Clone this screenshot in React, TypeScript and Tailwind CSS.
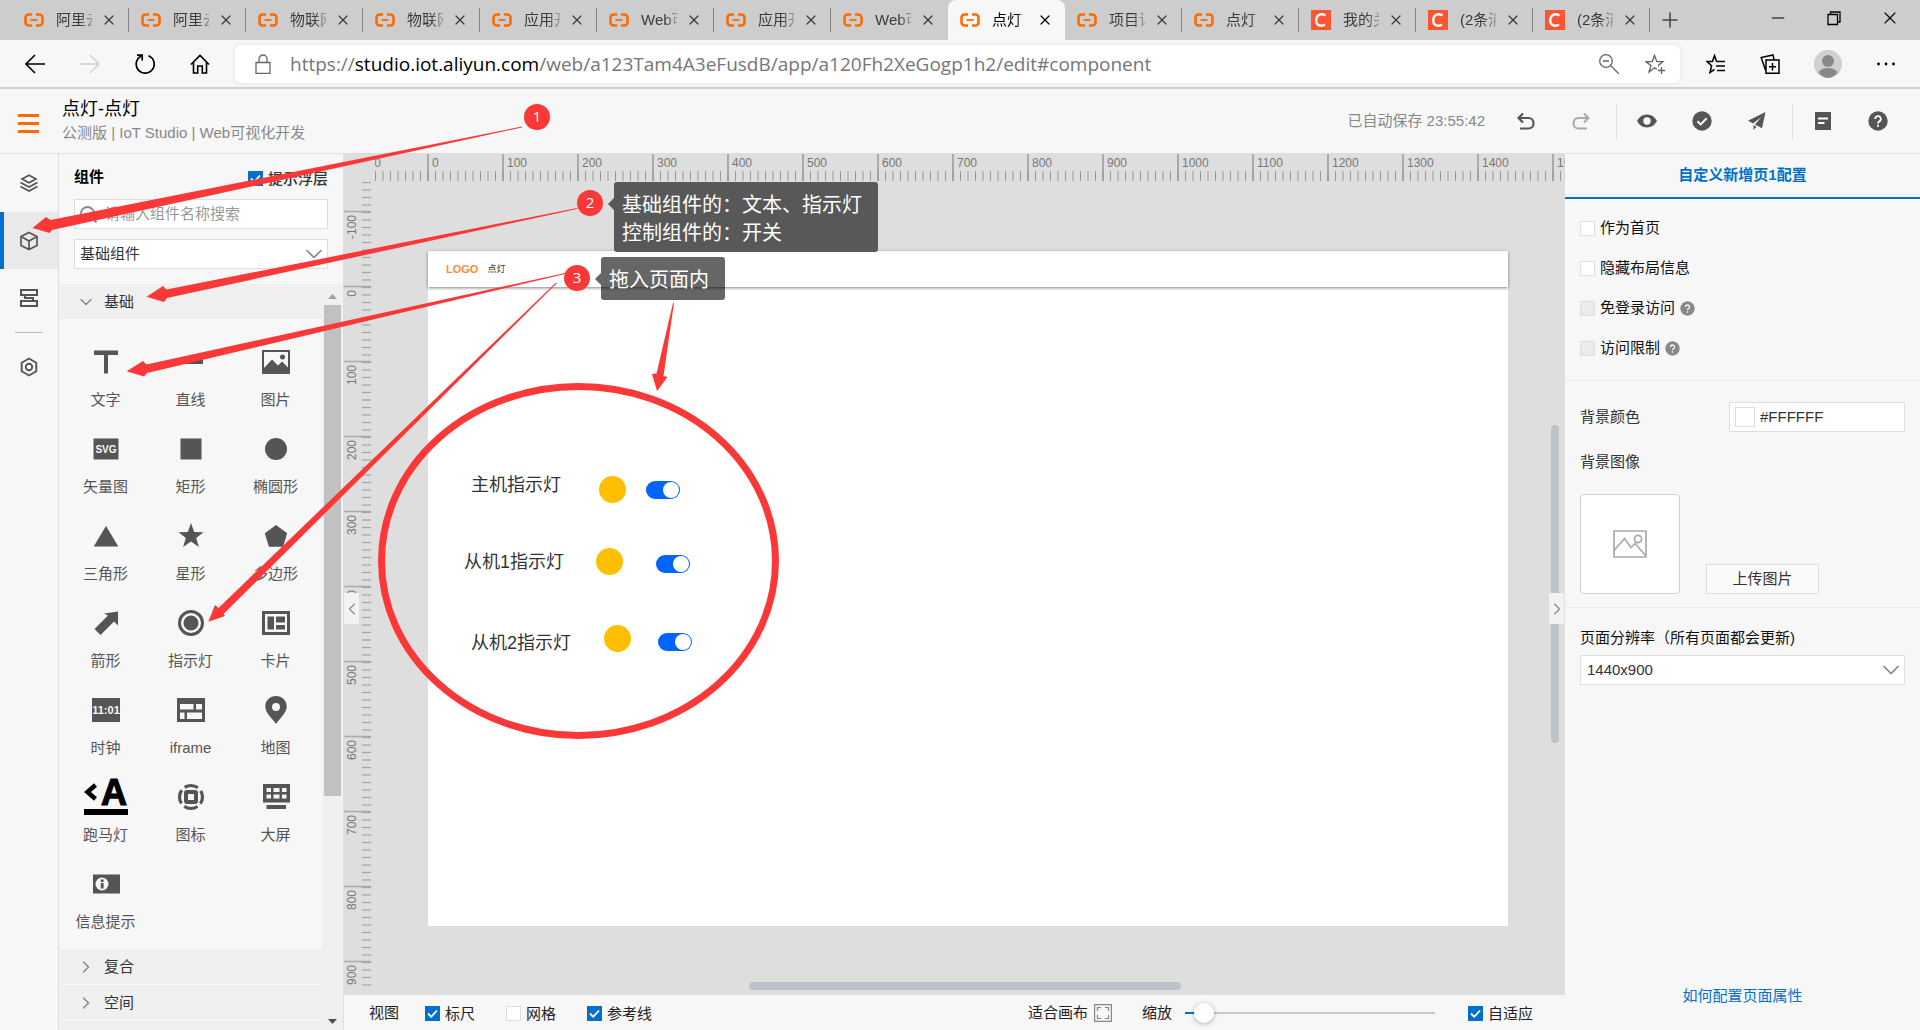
import React, { useState } from 'react';
import { ChevronDown, ChevronLeft, ChevronRight, Minus, Plus, X } from 'lucide-react';

const tabs = [
  { title: '阿里云', site: 'aliyun' },
  { title: '阿里云', site: 'aliyun' },
  { title: '物联网', site: 'aliyun' },
  { title: '物联网', site: 'aliyun' },
  { title: '应用开', site: 'aliyun' },
  { title: 'Web可', site: 'aliyun' },
  { title: '应用开', site: 'aliyun' },
  { title: 'Web可', site: 'aliyun' },
  { title: '点灯', site: 'aliyun', active: true },
  { title: '项目详', site: 'aliyun' },
  { title: '点灯', site: 'aliyun' },
  { title: '我的关', site: 'csdn' },
  { title: '(2条消', site: 'csdn' },
  { title: '(2条消', site: 'csdn' },
];

function Favicon({ site }: { site: string }) {
  if (site === 'csdn') {
    return (
      <svg className="w-5 h-5 shrink-0" viewBox="0 0 20 20">
        <rect width="20" height="20" fill="#fc5531" />
        <path d="M14.500 5.600c-1-.9-2.200-1.300-3.700-1.300-3.300 0-5.600 2.400-5.600 5.900 0 3.300 2 5.500 5.200 5.500 1.500 0 2.700-.3 3.700-.9" fill="none" stroke="#fff" strokeWidth="2.400" />
      </svg>
    );
  }
  return (
    <svg className="w-5 h-5 shrink-0" viewBox="0 0 20 20" fill="none" stroke="#ff6a00">
      <path d="M8 4.500H4.500a3 3 0 0 0-3 3v5a3 3 0 0 0 3 3H8" strokeWidth="2.600" />
      <path d="M12 4.500h3.500a3 3 0 0 1 3 3v5a3 3 0 0 1-3 3H12" strokeWidth="2.600" />
      <path d="M6.500 10h7" strokeWidth="1.800" />
    </svg>
  );
}

function TabStrip() {
  return (
    <div className="flex h-10 bg-[#cdcdcd] pl-3">
      {tabs.map((tab, i) => {
        const noLine = tab.active || tabs[i + 1]?.active;
        return (
          <div
            key={i}
            className={
              tab.active
                ? 'relative flex w-[117px] items-center rounded-t-lg bg-[#f7f7f7] pl-3 text-black'
                : 'relative flex w-[117px] items-center pl-3 text-[#3a3a3a]'
            }
          >
            <Favicon site={tab.site} />
            <span className="ml-3 w-9 overflow-hidden whitespace-nowrap text-[15px] leading-5 [mask-image:linear-gradient(to_right,black_65%,rgba(0,0,0,0.3))]">
              {tab.title}
            </span>
            <button className="ml-[9px]" aria-label="关闭标签页">
              <X className="h-4 w-4" strokeWidth={1.8} />
            </button>
            {!noLine && <div className="absolute right-0 top-2 h-6 w-px bg-[#858585]"></div>}
          </div>
        );
      })}
      <button className="ml-2 text-[#444]" aria-label="新建标签页">
        <Plus className="h-6 w-6" strokeWidth={1.5} />
      </button>
      <div className="ml-auto flex items-center gap-9 pr-5 pb-1 text-black">
        <button aria-label="最小化">
          <Minus className="h-5 w-5" strokeWidth={1.4} />
        </button>
        <button aria-label="还原">
          <svg className="h-5 w-5" viewBox="0 0 20 20" fill="none" stroke="currentColor" strokeWidth="1.300">
            <path d="M4 6.500h9.500v10H4zM6.500 6.500v-2.500h9.500v10h-2.500" />
          </svg>
        </button>
        <button aria-label="关闭">
          <X className="h-5 w-5" strokeWidth={1.3} />
        </button>
      </div>
    </div>
  );
}

function AddressBar() {
  return (
    <div className="flex h-[49px] items-center border-b-2 border-[#cfcfcf] bg-[#f7f7f7] pl-[25px] pr-6">
      <div className="flex items-center gap-[35px] text-black">
        <button aria-label="后退">
          <svg className="h-5 w-5" viewBox="0 0 20 20" fill="none" stroke="currentColor" strokeWidth="1.600">
            <path d="M20 10H1M10 1 1 10l9 9" />
          </svg>
        </button>
        <button aria-label="前进" className="text-[#cfcfcf]">
          <svg className="h-5 w-5" viewBox="0 0 20 20" fill="none" stroke="currentColor" strokeWidth="1.400">
            <path d="M0 10h19M10 1l9 9-9 9" />
          </svg>
        </button>
        <button aria-label="刷新">
          <svg className="h-5 w-5" viewBox="0 0 20 20" fill="none" stroke="currentColor" strokeWidth="1.700">
            <path d="M13.500 1.800A9 9 0 1 1 6 2.200M2 1.200h5.200v5.200" />
          </svg>
        </button>
        <button aria-label="主页">
          <svg className="h-5 w-5" viewBox="0 0 20 20" fill="none" stroke="currentColor" strokeWidth="1.600">
            <path d="M1 10.500 10 1.500l9 9M3.500 8.500V19h4.200v-7h4.600v7h4.200V8.500" />
          </svg>
        </button>
      </div>
      <div className="ml-[25px] flex h-[38px] flex-1 items-center rounded-md bg-white pl-5 pr-[15px] shadow-[0_0_4px_rgba(0,0,0,0.1)]">
        <svg className="h-5 w-4 shrink-0" viewBox="0 0 16 20" fill="none" stroke="#666" strokeWidth="1.300">
          <path d="M1 8.500h14v11H1zM4 8.500V5a4 4 0 0 1 8 0v3.500" />
        </svg>
        <div className="ml-[19px] flex-1 whitespace-nowrap font-['Open_Sans','Noto_Sans',sans-serif] text-[19px] leading-6 text-[#767676]">
          https://<span className="text-black">studio.iot.aliyun.com</span>/web/a123Tam4A3eFusdB/app/a120Fh2XeGogp1h2/edit#component
        </div>
        <div className="flex gap-[26px] text-[#666]">
          <button aria-label="缩放">
            <svg className="h-5 w-5" viewBox="0 0 20 20" fill="none" stroke="currentColor" strokeWidth="1.300">
              <circle cx="7" cy="7" r="6.300" />
              <path d="M4 7h6M11.500 11.500 20 20" />
            </svg>
          </button>
          <button aria-label="收藏">
            <svg className="h-5 w-5" viewBox="0 0 20 20" fill="none" stroke="currentColor" strokeWidth="1.300">
              <path d="M12 15.500 9.500 13.800 4 18l2-6.500L1 7.600h6.200L9.500 1.500l2.300 6.100H18l-4.500 3.600.4 1.300M13 16.500h7M16.500 13v7" />
            </svg>
          </button>
        </div>
      </div>
      <div className="ml-[26px] flex items-center gap-[34px] text-black">
        <button aria-label="收藏夹">
          <svg className="h-5 w-5" viewBox="0 0 20 20" fill="none" stroke="currentColor" strokeWidth="1.500">
            <path d="M10.500 7.600 8.500 1.500l-2 6.100H1l4.600 4.100L4 18.500l4.500-3.200M10.500 7.600H19M10 12h9M11 16.500h8" />
          </svg>
        </button>
        <button aria-label="集锦">
          <svg className="h-5 w-5" viewBox="0 0 20 20" fill="none" stroke="currentColor" strokeWidth="1.500">
            <path d="M6 6h13v13.200H6zM12.500 9v7.500M9 12.700h7M5.500 16 1.200 3.500 13 1l1 4.500" />
          </svg>
        </button>
        <button aria-label="个人资料">
          <svg className="h-7 w-7" viewBox="0 0 28 28">
            <circle cx="14" cy="14" r="14" fill="#d2d0ce" />
            <circle cx="14" cy="11" r="6" fill="#8a8886" />
            <path d="M4.500 22.500C6 19.500 9.500 18 14 18s8 1.500 9.500 4.500A14 14 0 0 1 14 28a14 14 0 0 1-9.500-5.500z" fill="#8a8886" />
          </svg>
        </button>
        <button aria-label="设置及其他">
          <svg className="h-5 w-5" viewBox="0 0 20 20" fill="currentColor">
            <circle cx="2.500" cy="10" r="1.400" />
            <circle cx="10" cy="10" r="1.400" />
            <circle cx="17.500" cy="10" r="1.400" />
          </svg>
        </button>
      </div>
    </div>
  );
}

function AppHeader() {
  return (
    <header className="flex h-[65px] items-center border-b border-[#dedede] bg-[#f7f7f7] pl-[18px] pr-8">
      <button aria-label="菜单" className="mt-1 flex w-[21px] flex-col gap-[5px]">
        <span className="h-[3px] w-full bg-[#ff6a00]"></span>
        <span className="h-[3px] w-full bg-[#ff6a00]"></span>
        <span className="h-[3px] w-full bg-[#ff6a00]"></span>
      </button>
      <div className="ml-[23px]">
        <h1 className="text-[18px] leading-6 text-black">点灯-点灯</h1>
        <p className="text-[15px] leading-6 text-[#888]">公测版 | IoT Studio | Web可视化开发</p>
      </div>
      <div className="ml-auto flex items-center text-[#555]">
        <span className="mr-[31px] text-[15px] leading-5 text-[#888]">已自动保存 23:55:42</span>
        <button aria-label="撤销">
          <svg className="h-5 w-5" viewBox="0 0 20 20" fill="none" stroke="currentColor" strokeWidth="2.200">
            <path d="M4 17.500h8.500a5 5 0 0 0 5-5v-.5a5 5 0 0 0-5-5H3M7 2.500 2.500 7 7 11.500" />
          </svg>
        </button>
        <button aria-label="重做" className="ml-[35px] text-[#aaa]">
          <svg className="h-5 w-5" viewBox="0 0 20 20" fill="none" stroke="currentColor" strokeWidth="2">
            <path d="M16 17.500H7.500a5 5 0 0 1-5-5v-.5a5 5 0 0 1 5-5H17M13 2.500 17.500 7 13 11.500" />
          </svg>
        </button>
        <div className="ml-[25px] mr-5 h-[35px] w-px bg-[#dedede]"></div>
        <button aria-label="预览">
          <svg className="h-5 w-5" viewBox="0 0 20 20" fill="currentColor">
            <path fillRule="evenodd" d="M10 3.500c4.500 0 8 2.800 10 6.500-2 3.700-5.500 6.500-10 6.500S2 13.700 0 10c2-3.700 5.500-6.500 10-6.500zm0 2.800a3.700 3.700 0 1 0 0 7.400 3.700 3.700 0 0 0 0-7.400z" />
          </svg>
        </button>
        <button aria-label="验证" className="ml-[35px]">
          <svg className="h-5 w-5" viewBox="0 0 20 20">
            <circle cx="10" cy="10" r="9.700" fill="currentColor" />
            <path d="m5.500 10.200 3.200 3.200 6-6.200" fill="none" stroke="#fff" strokeWidth="2" />
          </svg>
        </button>
        <button aria-label="发布" className="ml-[35px]">
          <svg className="h-5 w-5" viewBox="0 0 20 20" fill="currentColor">
            <path d="M18.500 1 1 9.800l5 2.600L14.500 6 8 13.500l7 3.800zM6.500 14v5l3-3.300z" />
          </svg>
        </button>
        <div className="ml-[25px] mr-5 h-[35px] w-px bg-[#dedede]"></div>
        <button aria-label="文档">
          <svg className="h-5 w-5" viewBox="0 0 20 20">
            <path d="M2 1h16v18H2z" fill="currentColor" />
            <path d="M5 7.500h10M5 12h6.500" stroke="#fff" strokeWidth="1.800" />
          </svg>
        </button>
        <button aria-label="帮助" className="ml-[35px]">
          <svg className="h-5 w-5" viewBox="0 0 20 20">
            <circle cx="10" cy="10" r="9.700" fill="currentColor" />
            <path d="M7.200 8a2.800 2.800 0 1 1 4.200 2.400c-.9.5-1.400 1-1.400 2M10 13.800v2" fill="none" stroke="#fff" strokeWidth="1.800" />
          </svg>
        </button>
      </div>
    </header>
  );
}

function SideRail() {
  return (
    <nav className="flex w-[59px] shrink-0 flex-col border-r border-[#dedede] bg-[#f7f7f7] text-[#555]">
      <button aria-label="页面" className="flex h-[58px] items-center justify-center">
        <svg className="h-5 w-5" viewBox="0 0 20 20" fill="none" stroke="currentColor" strokeWidth="1.700">
          <path d="M10 2.200 17 6l-7 3.800L3 6zM1.500 9.500 10 14l8.500-4.500M1.500 13.500 10 18l8.500-4.500" />
        </svg>
      </button>
      <button aria-label="组件" className="flex h-[57px] items-center justify-center border-l-4 border-[#0070cc] bg-[#e9e9e9] pr-1">
        <svg className="h-5 w-5" viewBox="0 0 20 20" fill="none" stroke="currentColor" strokeWidth="1.700">
          <path d="m10 1.500 8 4v9l-8 4-8-4v-9zM2 5.500l8 4.500 8-4.500M10 10v8.500" />
        </svg>
      </button>
      <button aria-label="数据" className="flex h-[58px] items-center justify-center">
        <svg className="h-5 w-5" viewBox="0 0 20 20" fill="none" stroke="currentColor" strokeWidth="2">
          <path d="M2 2h16v5H2zM2 13h16v5H2zM6 7v3h8v3" />
        </svg>
      </button>
      <div className="mx-[15px] mt-[5px] mb-6 h-px bg-[#bbb]"></div>
      <button aria-label="设置" className="flex justify-center">
        <svg className="h-5 w-5" viewBox="0 0 20 20" fill="none" stroke="currentColor" strokeWidth="1.900">
          <path d="m10 1.500 7.300 4.200v8.600L10 18.500l-7.300-4.200V5.700z" />
          <circle cx="10" cy="10" r="3.200" />
        </svg>
      </button>
    </nav>
  );
}

interface CheckProps {
  id: string;
  label: string;
  checked?: boolean;
  disabled?: boolean;
}

function Check({ id, label, checked = false, disabled = false }: CheckProps) {
  const [on, setOn] = useState(checked);
  return (
    <div className="flex items-center gap-[5px]">
      <div className="grid h-[15px] w-[15px]">
        <input
          id={id}
          type="checkbox"
          checked={on}
          disabled={disabled}
          onChange={() => setOn(!on)}
          className="col-start-1 row-start-1 h-[15px] w-[15px] appearance-none border border-[#dedede] bg-white checked:border-[#0070cc] checked:bg-[#0070cc] disabled:bg-[#ebebeb]"
        />
        {on && (
          <svg className="pointer-events-none col-start-1 row-start-1 h-[15px] w-[15px]" viewBox="0 0 15 15" fill="none" stroke="#fff" strokeWidth="1.800">
            <path d="m3 7.500 3.200 3.300L12 4.500" />
          </svg>
        )}
      </div>
      <label htmlFor={id} className="whitespace-nowrap text-[15px] leading-5">
        {label}
      </label>
    </div>
  );
}

const star = '16,3 19.200,12 28.500,12.200 21.200,17.900 23.900,27 16,21.600 8.100,27 10.800,17.900 3.500,12.200 12.800,12';

const widgets = [
  { name: '文字', icon: <path d="M4 4.500h24V9H18v18.500h-4V9H4z" /> },
  { name: '直线', icon: <path d="M4 13.500h24v4.500H4z" /> },
  {
    name: '图片',
    icon: (
      <>
        <path fillRule="evenodd" d="M2 4h28v24H2zM4 6v16l8-8.500 6 6 4-4 6 6V6z" />
        <circle cx="22.500" cy="11" r="2.500" />
      </>
    ),
  },
  {
    name: '矢量图',
    icon: (
      <>
        <path d="M3.500 5.500h25v21h-25z" />
        <text x="16" y="19.500" fontSize="10" fontWeight="700" fill="#f7f7f7" textAnchor="middle">SVG</text>
      </>
    ),
  },
  { name: '矩形', icon: <path d="M5.500 5.500h21v21h-21z" /> },
  { name: '椭圆形', icon: <circle cx="16" cy="16" r="11" /> },
  { name: '三角形', icon: <path d="m16 6 12.300 20.500H3.700z" /> },
  { name: '星形', icon: <polygon points={star} /> },
  { name: '多边形', icon: <path d="m16 5 11.200 8.300L23 26.700H9L4.800 13.300z" /> },
  { name: '箭形', icon: <path d="M28 4.500v14l-4-4L10.500 28 4.500 22 18 8.500l-4-2z" /> },
  {
    name: '指示灯',
    icon: (
      <>
        <circle cx="16" cy="16" r="11.500" fill="none" stroke="currentColor" strokeWidth="3" />
        <circle cx="16" cy="16" r="7.500" />
      </>
    ),
  },
  {
    name: '卡片',
    icon: <path fillRule="evenodd" d="M2 4h28v24H2zM5 7v18h22V7zM7.500 9.500h6.500v13H7.500zM16 9.500h9v6h-9zM16 18h9v4.500h-9z" />,
  },
  {
    name: '时钟',
    icon: (
      <>
        <path d="M2 4h28v24H2z" />
        <text x="16" y="20" fontSize="11" fontWeight="700" fill="#f7f7f7" textAnchor="middle">11:01</text>
      </>
    ),
  },
  {
    name: 'iframe',
    icon: <path fillRule="evenodd" d="M2 4h28v24H2zM5 10v5.500h13.500V10zM21 10v5.500h6V10zM5 18.500V25h4.500v-6.500zM12 18.500V25h15v-6.500z" />,
  },
  {
    name: '地图',
    icon: <path fillRule="evenodd" d="M16 2c6 0 10.700 4.500 10.700 10.500C26.700 19 20 24 16 30 12 24 5.300 19 5.300 12.500 5.300 6.500 10 2 16 2zm0 7a4 4 0 1 0 0 8 4 4 0 0 0 0-8z" />,
  },
  { name: '跑马灯', icon: null },
  {
    name: '图标',
    icon: (
      <>
        <circle cx="16" cy="16" r="11.500" fill="none" stroke="currentColor" strokeWidth="3.200" strokeDasharray="14 4.060" strokeDashoffset="7" />
        <path fillRule="evenodd" d="M12 9h8a3 3 0 0 1 3 3v8a3 3 0 0 1-3 3h-8a3 3 0 0 1-3-3v-8a3 3 0 0 1 3-3zm1 4v6h6v-6z" />
      </>
    ),
  },
  {
    name: '大屏',
    icon: (
      <path fillRule="evenodd" d="M3 3h27v18.500H3zM6.500 7v4h4.500V7zM13.500 7v4h6V7zM22 7v4h4.500V7zM6.500 13.500v4h4.500v-4zM13.500 13.500v4h6v-4zM22 13.500v4h4.500v-4zM6.500 24h19.500v4H6.500z" />
    ),
  },
  {
    name: '信息提示',
    icon: (
      <>
        <path d="M3 6.500h27v19H3z" />
        <circle cx="12" cy="16" r="6.500" fill="#f7f7f7" />
        <path d="M10.800 11.500h2.800V14h-2.800zM10.800 15h2.800v5.500h-2.800z" />
      </>
    ),
  },
];

function ComponentPanel() {
  return (
    <aside className="flex w-[285px] shrink-0 flex-col border-r border-[#dedede] bg-[#f7f7f7]">
      <div className="flex h-[45px] items-center justify-between pl-[15px] pr-[15px] text-[15px] leading-5">
        <h2 className="font-bold text-black">组件</h2>
        <div className="pt-1 font-medium text-[#333]">
          <Check id="tips" label="提示浮层" checked />
        </div>
      </div>
      <div className="mx-[15px] flex h-[30px] items-center border border-[#dedede] bg-white">
        <svg className="ml-1 h-5 w-5 shrink-0" viewBox="0 0 20 20" fill="none" stroke="#888" strokeWidth="1.800">
          <circle cx="8.500" cy="9.500" r="6.500" />
          <path d="m13 14 4.500 4.500" />
        </svg>
        <input
          type="text"
          aria-label="搜索组件"
          placeholder="请输入组件名称搜索"
          className="ml-[6px] w-full min-w-0 bg-transparent text-[15px] leading-5 text-[#333] outline-none placeholder:text-[#999]"
        />
      </div>
      <div className="relative mx-[15px] mt-[10px]">
        <select aria-label="组件分类" className="h-[30px] w-full appearance-none border border-[#dedede] bg-white pl-[5px] text-[15px] leading-5 text-[#333]">
          <option>基础组件</option>
        </select>
        <ChevronDown className="pointer-events-none absolute right-0 top-px h-7 w-7 text-[#888]" strokeWidth={1.5} />
      </div>

      <div className="mt-[15px] flex min-h-0 flex-1 bg-[#f0f0f0]">
        <div className="min-w-0 flex-1 overflow-hidden">
          <button className="flex h-[35px] w-full items-center bg-[#f0f0f0] pl-[17px] text-[15px] leading-5 text-[#333]">
            <ChevronDown className="h-5 w-5 text-[#888]" strokeWidth={1.8} />
            <span className="ml-2">基础</span>
          </button>
          <div className="grid grid-cols-[repeat(3,85px)] bg-[#f7f7f7] px-1 pt-[10px] pb-[11px] text-[#555]">
            {widgets.map((w) => (
              <div key={w.name} className="flex h-[87px] flex-col items-center pt-2">
                <div className="flex h-[50px] items-center">
                  {w.icon ? (
                    <svg className="h-8 w-8" viewBox="0 0 32 32" fill="currentColor">{w.icon}</svg>
                  ) : (
                    <svg className="h-10 w-12 text-black" viewBox="0 0 48 40" fill="currentColor">
                      <path d="M13.500 8 5.500 15l8 7" fill="none" stroke="currentColor" strokeWidth="4.500" />
                      <text x="32" y="28" fontSize="36" fontWeight="700" textAnchor="middle" stroke="currentColor" strokeWidth="1.200">A</text>
                      <path d="M2 32h44v6H2z" />
                    </svg>
                  )}
                </div>
                <span className="mt-[3px] whitespace-nowrap text-[15px] leading-5">{w.name}</span>
              </div>
            ))}
          </div>
          {['复合', '空间', '控制'].map((name) => (
            <button key={name} className="flex h-9 w-full items-center border-b border-[#f7f7f7] bg-[#f0f0f0] pl-[17px] text-[15px] leading-5 text-[#333]">
              <ChevronRight className="h-5 w-5 text-[#888]" strokeWidth={1.8} />
              <span className="ml-2">{name}</span>
            </button>
          ))}
        </div>
        <div className="flex w-[21px] flex-col items-center pt-2 pb-1">
          <svg className="h-[9px] w-[9px]" viewBox="0 0 9 9"><path d="M0 7h9L4.500 2z" fill="#a0a0a0" /></svg>
          <div className="mt-1 h-[491px] w-[17px] bg-[#c1c1c1]"></div>
          <svg className="mt-auto h-[9px] w-[9px]" viewBox="0 0 9 9"><path d="M0 2h9L4.500 7z" fill="#505050" /></svg>
        </div>
      </div>
    </aside>
  );
}

// rulers: 100 units are 75px, a small tick every 10 units
function TopRuler() {
  const minors = Array.from({ length: 160 }, (_, i) => 0.5 + i * 7.5);
  const majors = Array.from({ length: 17 }, (_, i) => i - 1);
  return (
    <svg className="block h-7 w-full bg-[#dedede]" fontSize="12" fill="#777">
      <svg x="31" width="100%" height="28" overflow="hidden">
        {minors.map((x) => (
          <path key={x} d={`M${x} 17v10`} stroke="#999" strokeWidth="1" />
        ))}
        {majors.map((n) => (
          <g key={n}>
            <path d={`M${n * 75 + 53} 0v27`} stroke="#999" strokeWidth="1.500" />
            <text x={n * 75 + 57} y="13">{n * 100}</text>
          </g>
        ))}
      </svg>
    </svg>
  );
}

function LeftRuler() {
  const minors = Array.from({ length: 108 }, (_, i) => 0.5 + i * 7.5);
  const majors = Array.from({ length: 11 }, (_, i) => i - 1);
  return (
    <svg className="block h-full w-7 shrink-0 bg-[#dedede]" fontSize="12" fill="#777">
      {minors.map((y) => (
        <path key={y} d={`M18 ${y}h9`} stroke="#a4a4a4" strokeWidth="1.200" />
      ))}
      {majors.map((n) => (
        <g key={n}>
          <path d={`M0 ${n * 75 + 104.5}h27`} stroke="#aaa" strokeWidth="1.500" />
          <text transform={`translate(12 ${n * 75 + 108}) rotate(-90)`} textAnchor="end">{n * 100}</text>
        </g>
      ))}
    </svg>
  );
}

const devices = [
  { name: '主机指示灯', text: 'left-[43px] top-[222px]', lamp: 'left-[171px] top-[225px]', toggle: 'left-[218px] top-[230px]' },
  { name: '从机1指示灯', text: 'left-[36px] top-[299px]', lamp: 'left-[168px] top-[297px]', toggle: 'left-[228px] top-[304px]' },
  { name: '从机2指示灯', text: 'left-[43px] top-[380px]', lamp: 'left-[176px] top-[374px]', toggle: 'left-[230px] top-[382px]' },
];

function PageCanvas() {
  return (
    <div className="relative flex min-w-0 flex-1 bg-[#dedede] pt-[69px] pr-[57px] pb-[69px] pl-14">
      <div className="relative flex-1 bg-white">
        <div className="flex h-9 items-center gap-[9px] pl-[18px] shadow-[0_1px_3px_rgba(0,0,0,0.5)]">
          <span className="text-[11px] leading-4 font-bold text-[#ff8a3c]">LOGO</span>
          <span className="text-[9px] leading-4 text-[#333]">点灯</span>
        </div>
        {devices.map((d) => (
          <div key={d.name}>
            <label htmlFor={d.name} className={`absolute text-[18px] leading-6 whitespace-nowrap text-[#333] ${d.text}`}>
              {d.name}
            </label>
            <div className={`absolute h-[27px] w-[27px] rounded-full bg-[#ffbf00] ${d.lamp}`}></div>
            <input
              id={d.name}
              type="checkbox"
              role="switch"
              defaultChecked
              className={`absolute h-[18px] w-[34px] appearance-none rounded-full bg-[#bbb] checked:bg-[#0064ff] before:absolute before:top-px before:left-px before:h-4 before:w-4 before:rounded-full before:bg-white checked:before:left-[17px] ${d.toggle}`}
            />
          </div>
        ))}
      </div>
      {/* scroll thumbs and the panel handle lie over the canvas */}
      <div className="absolute top-[243px] right-[6px] h-[318px] w-2 rounded-full bg-[#bcc3cb]"></div>
      <div className="absolute bottom-[5px] left-[377px] h-2 w-[432px] rounded-full bg-[#bcc3cb]"></div>
      <button aria-label="收起配置" className="absolute top-[411px] right-px flex h-[31px] w-[15px] items-center justify-center bg-[#f2f2f2] text-[#888]">
        <ChevronRight className="h-5 w-5 shrink-0" strokeWidth={1.3} />
      </button>
    </div>
  );
}

function BottomBar() {
  return (
    <footer className="flex h-[35px] items-center bg-[#f7f7f7] pl-[25px] pr-8 text-[15px] leading-5 text-[#222]">
      <span className="mr-[26px]">视图</span>
      <div className="flex gap-[31px] pt-0.5">
        <Check id="ruler" label="标尺" checked />
        <Check id="grid" label="网格" />
        <Check id="guide" label="参考线" checked />
      </div>
      <button className="ml-auto flex items-center gap-[6px]">
        适合画布
        <svg className="h-[18px] w-[18px]" viewBox="0 0 18 18" fill="none" stroke="#888" strokeWidth="1.200">
          <path d="M.6.600h16.800v16.800H.6zM3.500 7V3.500H7M11 3.500h3.500V7M14.500 11v3.500H11M7 14.500H3.500V11" />
        </svg>
      </button>
      <label htmlFor="zoom" className="ml-[30px]">缩放</label>
      <input
        id="zoom"
        type="range"
        min={0}
        max={100}
        defaultValue={4}
        className="ml-[13px] mr-[33px] h-5 w-[250px] appearance-none bg-[linear-gradient(to_right,#0070cc_10px,#c8c8c8_10px)] bg-[length:100%_2px] bg-center bg-no-repeat [&::-webkit-slider-thumb]:h-5 [&::-webkit-slider-thumb]:w-5 [&::-webkit-slider-thumb]:appearance-none [&::-webkit-slider-thumb]:rounded-full [&::-webkit-slider-thumb]:bg-white [&::-webkit-slider-thumb]:shadow-[0_1px_5px_rgba(0,0,0,0.3)]"
      />
      <div className="pt-0.5">
        <Check id="fit" label="自适应" checked />
      </div>
    </footer>
  );
}

function HelpDot() {
  return (
    <svg className="ml-[5px] h-[15px] w-[15px]" viewBox="0 0 15 15">
      <circle cx="7.500" cy="7.500" r="7.200" fill="#888" />
      <path d="M5.500 6a2 2 0 1 1 3 1.700c-.7.400-1 .700-1 1.400M7.500 10.300v1.500" fill="none" stroke="#fff" strokeWidth="1.300" />
    </svg>
  );
}

function ConfigPanel() {
  return (
    <aside className="flex w-[355px] shrink-0 flex-col bg-[#f7f7f7] text-[15px] leading-5 text-[#333]">
      <h2 className="flex h-[41px] items-center justify-center border-b border-[#ebebeb] pt-0.5 font-bold text-[#0070cc]">自定义新增页1配置</h2>
      <div className="mt-0.5 h-0.5 bg-[#0070cc]"></div>
      <div className="flex flex-col gap-5 border-b border-[#ebebeb] px-[15px] pt-[19px] pb-[22px] text-[#111]">
        <Check id="home" label="作为首页" />
        <Check id="hide" label="隐藏布局信息" />
        <div className="flex items-center">
          <Check id="nologin" label="免登录访问" disabled />
          <HelpDot />
        </div>
        <div className="flex items-center">
          <Check id="limit" label="访问限制" disabled />
          <HelpDot />
        </div>
      </div>
      <div className="border-b border-[#ebebeb] px-[15px] pt-[21px] pb-[13px]">
        <div className="flex items-center justify-between">
          <label htmlFor="bg">背景颜色</label>
          <div className="flex h-[30px] w-44 items-center border border-[#dedede] bg-white pl-[5px]">
            <div className="h-5 w-5 shrink-0 border border-[#dedede] bg-white"></div>
            <input id="bg" type="text" defaultValue="#FFFFFF" className="ml-[5px] w-full min-w-0 bg-transparent outline-none" />
          </div>
        </div>
        <p className="mt-5">背景图像</p>
        <div className="mt-[22px] flex items-end gap-[26px]">
          <div className="flex h-[100px] w-[100px] items-center justify-center rounded-sm border border-[#d0d0d0] bg-white">
            <svg className="h-7 w-[34px]" viewBox="0 0 34 28" fill="none" stroke="#aaa" strokeWidth="1.700">
              <path d="M1 1h32v26H1zM1 20.500 11.500 8.500l6.500 9 4-4L33 26" />
              <circle cx="25" cy="9" r="3.600" />
            </svg>
          </div>
          <button className="h-[30px] w-[113px] border border-[#dedede] bg-[#fafafa]">上传图片</button>
        </div>
      </div>
      <div className="px-[15px] pt-5">
        <label htmlFor="size" className="text-[#111]">页面分辨率（所有页面都会更新)</label>
        <div className="relative mt-[7px]">
          <select id="size" className="h-[30px] w-full appearance-none border border-[#dedede] bg-white pl-[6px]">
            <option>1440x900</option>
          </select>
          <ChevronDown className="pointer-events-none absolute top-px right-0 h-7 w-7 text-[#888]" strokeWidth={1.5} />
        </div>
      </div>
      <a href="#help" className="mt-auto mb-6 text-center text-[#0070cc]">如何配置页面属性</a>
    </aside>
  );
}

const badges = [
  { n: 1, x: 537, y: 117 },
  { n: 2, x: 590, y: 203 },
  { n: 3, x: 577, y: 278 },
];

function Annotations() {
  return (
    <>
      <svg className="pointer-events-none absolute inset-0 h-full w-full" fill="#fb3838">
        <path d="m522 126.500 0 1L52 230l-2.500 3-17-5L46 217l4.500 3z" />
        <path d="m577 208 0 1L167 298l-3 4-17.500-5.300L163 286l3.500 3.500z" />
        <path d="m565 273 0 1L147 373l-3 3.500-17.500-5.200L143 361l3.500 3.500z" />
        <path d="m556 282.500.8.8L223.500 614l1.500 2-16.700 5.700L215 605l3.500 3z" />
        <path d="m673 303h1l-10.500 73 4 1-10.500 14-5-17 4.500-.5z" />
        <ellipse cx="578.500" cy="561" rx="197" ry="174.500" fill="none" stroke="#fb3838" strokeWidth="7" />
        {badges.map((b) => (
          <g key={b.n}>
            <circle cx={b.x} cy={b.y} r="13" />
            <text x={b.x} y={b.y + 5} fontSize="15" fill="#fff" textAnchor="middle" fontFamily="'Open Sans', sans-serif">{b.n}</text>
          </g>
        ))}
      </svg>
      <div className="absolute top-[182px] left-[614px] w-[264px] rounded-[3px] bg-[#585858] px-2 pt-[9px] pb-[5px] text-[20px] leading-7 whitespace-nowrap text-white">
        <div className="absolute top-4 right-full border-y-[6px] border-r-[6px] border-y-transparent border-r-[#585858]"></div>
        <p>基础组件的：文本、指示灯</p>
        <p>控制组件的：开关</p>
      </div>
      <div className="absolute top-[257px] left-[601px] w-[124px] rounded-[3px] bg-black/60 px-2 pt-[9px] pb-[6px] text-[20px] leading-7 whitespace-nowrap text-white">
        <div className="absolute top-4 right-full border-y-[6px] border-r-[6px] border-y-transparent border-r-black/60"></div>
        <p>拖入页面内</p>
      </div>
    </>
  );
}

export default function App() {
  return (
    <div className="relative flex h-screen flex-col overflow-hidden bg-[#f7f7f7] font-['Liberation_Sans','Noto_Sans_CJK_SC',sans-serif]">
      <TabStrip />
      <AddressBar />
      <AppHeader />
      <div className="flex min-h-0 flex-1">
        <SideRail />
        <ComponentPanel />
        <main className="flex min-w-0 flex-1 flex-col">
          <TopRuler />
          <div className="relative flex min-h-0 flex-1">
            <LeftRuler />
            <PageCanvas />
            <button aria-label="收起组件" className="absolute top-[411px] left-0 flex h-[31px] w-[15px] items-center justify-center bg-[#f2f2f2] text-[#888]">
              <ChevronLeft className="h-5 w-5 shrink-0" strokeWidth={1.3} />
            </button>
          </div>
          <BottomBar />
        </main>
        <ConfigPanel />
      </div>
      <Annotations />
    </div>
  );
}
